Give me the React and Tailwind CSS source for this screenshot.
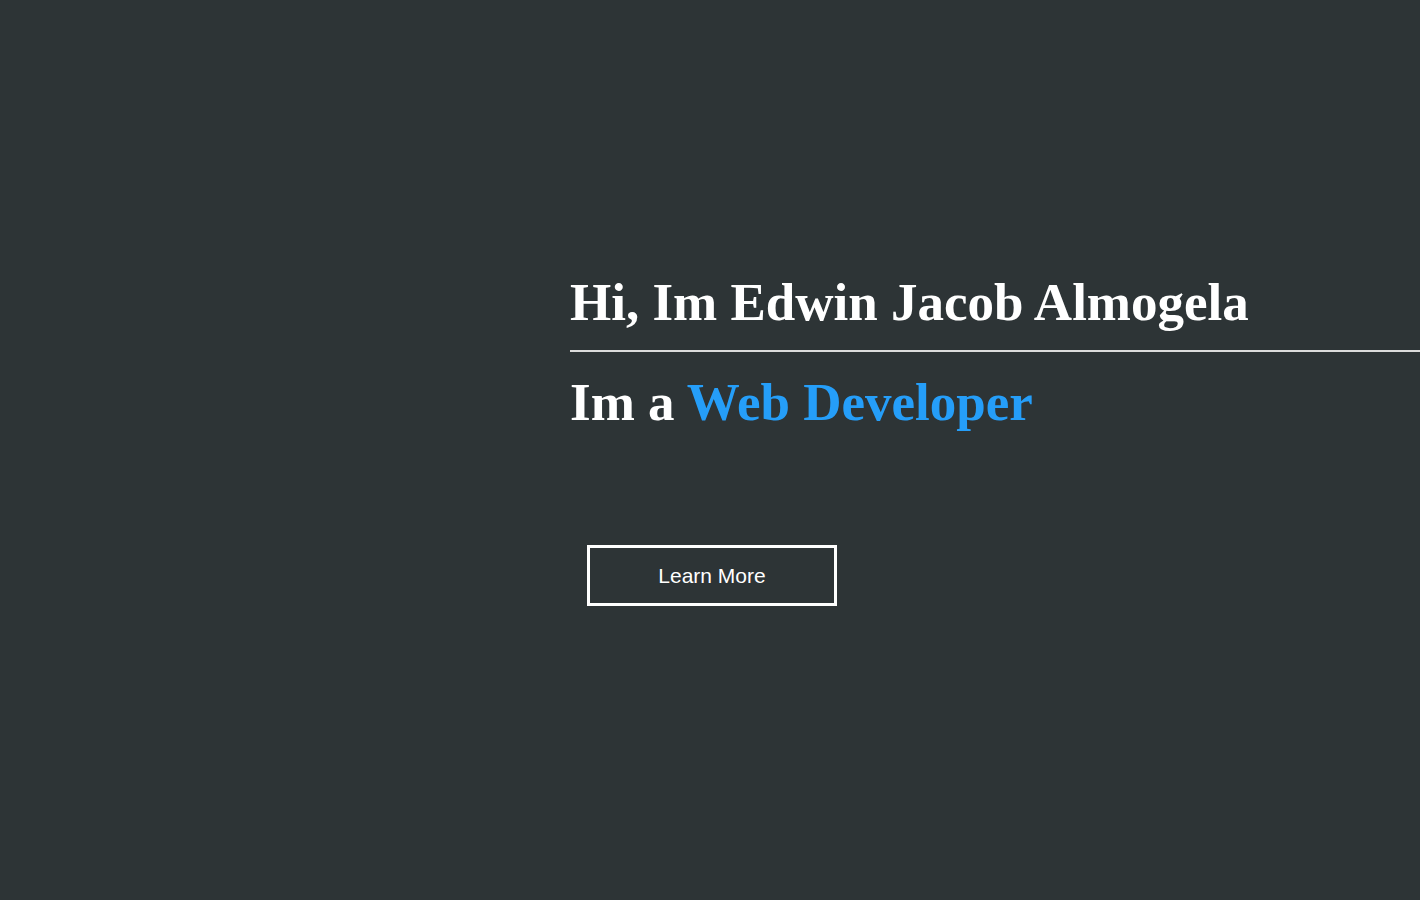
export default function App() {
    return (
        <div className="bg-white min-h-[907px]">
            {/* Hero */}
            <section className="h-[900px] bg-[#2d3436] flex flex-col pl-[570px] pt-[276px] font-['Liberation_Serif',serif]">
                <h1 className="text-[53px] leading-none font-bold text-white">Hi, Im Edwin Jacob Almogela</h1>
                <div className="mt-[21px] h-[2px] bg-[#dcdcdc]" />
                <h2 className="mt-[24px] text-[53px] leading-none font-bold text-white">
                    Im a <span className="text-[#259ef9]">Web Developer</span>
                </h2>
                <div className="mt-[116px] pl-[17px]">
                    <button className="w-[250px] h-[61px] border-[3px] border-white text-white text-[21px] font-['Liberation_Sans',Arial,sans-serif]">
                        Learn More
                    </button>
                </div>
            </section>
        </div>
    );
}
